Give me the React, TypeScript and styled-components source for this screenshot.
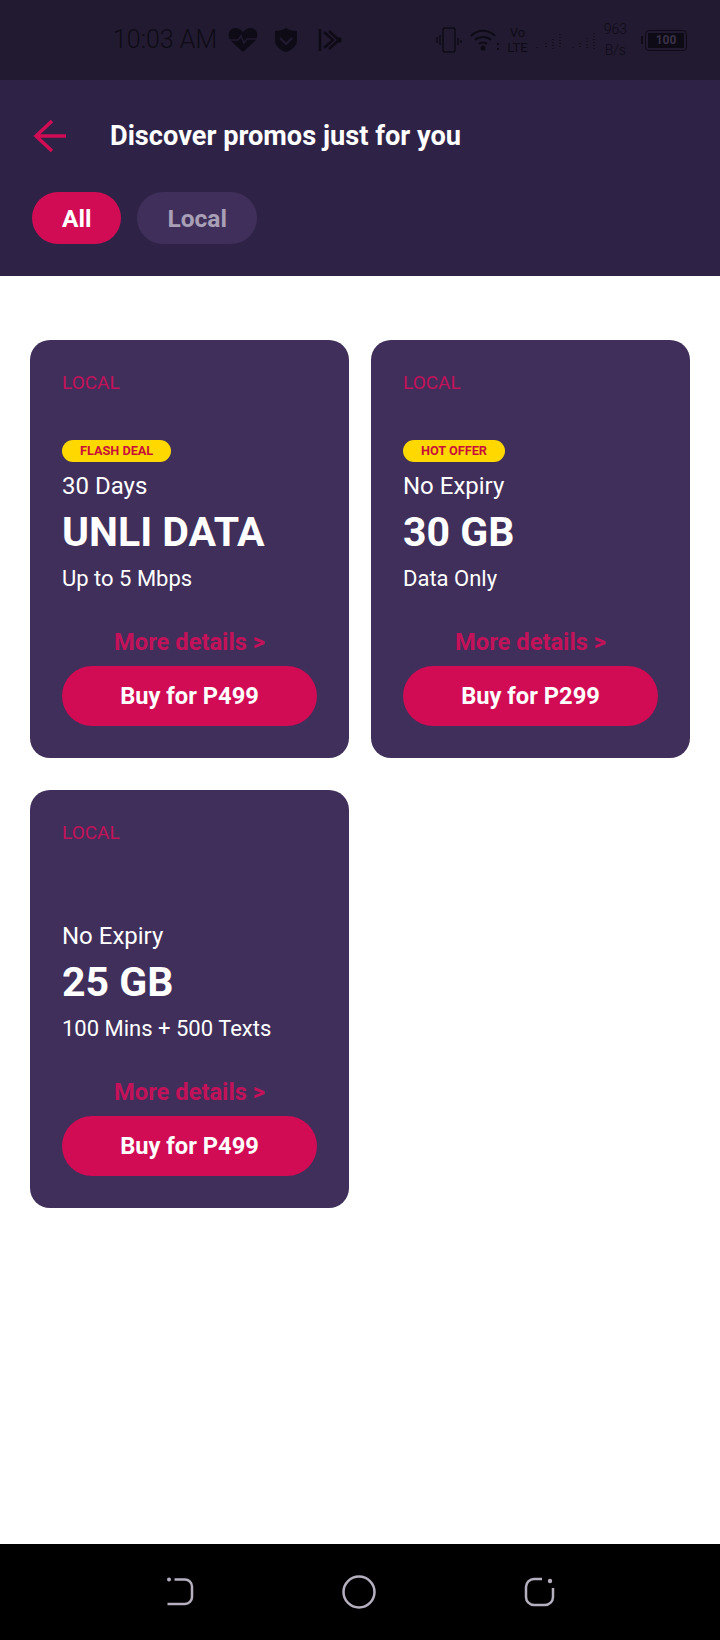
import styled, { createGlobalStyle } from "styled-components";

interface Promo {
  badge?: string;
  validity: string;
  title: string;
  detail: string;
  price: string;
}

const promos: Promo[] = [
  { badge: "FLASH DEAL", validity: "30 Days", title: "UNLI DATA", detail: "Up to 5 Mbps", price: "P499" },
  { badge: "HOT OFFER", validity: "No Expiry", title: "30 GB", detail: "Data Only", price: "P299" },
  { validity: "No Expiry", title: "25 GB", detail: "100 Mins + 500 Texts", price: "P499" },
];

const GlobalStyle = createGlobalStyle`
  html, body {
    margin: 0;
    padding: 0;
    background: #fff;
  }
  * {
    box-sizing: border-box;
  }
`;

const Page = styled.div`
  width: 720px;
  height: 1640px;
  display: flex;
  flex-direction: column;
  font-family: Roboto, "Liberation Sans", sans-serif;
`;

const StatusBar = styled.div`
  height: 80px;
  background: #221a31;
  display: flex;
  align-items: center;
  padding: 0 33px 0 113px;
  color: #0e0b16;
`;

const Time = styled.span`
  width: 115px;
  font-size: 25px;
  font-weight: 300;
  line-height: 80px;
  white-space: nowrap;
`;

const StatusIcons = styled.div`
  display: flex;
  align-items: center;
  gap: 16px;
`;

const PlayIcon = styled.svg`
  margin-left: 4px;
`;

const StatusRight = styled.div`
  margin-left: auto;
  display: flex;
  align-items: center;
  gap: 7px;
`;

const NetStack = styled.div`
  display: flex;
  flex-direction: column;
  align-items: center;
  gap: 1px;
  font-size: 13px;
  line-height: 14px;
  font-weight: 400;
`;

const Speed = styled(NetStack)`
  gap: 0;
  font-size: 14px;
  line-height: 21px;
  font-weight: 300;
  margin-right: 9px;
`;

const Battery = styled.div`
  width: 42px;
  height: 21px;
  margin-left: 2px;
  padding: 2px;
  border: 1.5px solid #0e0b16;
  border-radius: 4px;
  position: relative;
  &::before {
    content: "";
    position: absolute;
    left: -5px;
    top: 5px;
    width: 2px;
    height: 8px;
    background: #0e0b16;
  }
`;

const BatteryLevel = styled.div`
  height: 100%;
  background: #0e0b16;
  color: #3a3148;
  font-size: 12px;
  font-weight: 700;
  line-height: 14px;
  text-align: center;
`;

const Header = styled.header`
  height: 196px;
  background: #2e2347;
  padding: 0 32px;
  display: flex;
  flex-direction: column;
`;

const TitleRow = styled.div`
  height: 112px;
  display: flex;
  align-items: center;
`;

const BackButton = styled.button`
  width: 78px;
  height: 36px;
  padding: 0;
  border: none;
  background: none;
  display: flex;
  align-items: center;
`;

const Title = styled.h1`
  margin: 0;
  color: #fff;
  font-size: 27.2px;
  font-weight: 700;
`;

const Chips = styled.div`
  display: flex;
  gap: 16px;
`;

const Chip = styled.div<{ $active?: boolean }>`
  height: 52px;
  padding: 0 30px;
  border-radius: 26px;
  display: flex;
  align-items: center;
  font-size: 24.5px;
  font-weight: 700;
  background: ${(p) => (p.$active ? "#d10c55" : "#3f2f5a")};
  color: ${(p) => (p.$active ? "#fff" : "#a99fb6")};
`;

const Grid = styled.main`
  flex: 1;
  background: #fff;
  padding: 64px 30px 0;
  display: grid;
  grid-template-columns: 319px 319px;
  grid-auto-rows: 418px;
  gap: 32px 22px;
  align-content: start;
`;

const Card = styled.article`
  background: #3f2f5a;
  border-radius: 20px;
  padding: 31px 32px 32px;
  display: flex;
  flex-direction: column;
`;

const Category = styled.div`
  color: #c4125a;
  font-size: 19px;
  font-weight: 400;
  line-height: 24px;
`;

const BadgeSlot = styled.div`
  height: 22px;
  margin-top: 45px;
`;

const Badge = styled.div`
  width: fit-content;
  height: 22px;
  line-height: 22px;
  padding: 0 18px;
  border-radius: 11px;
  background: #ffd800;
  color: #c80f3c;
  font-size: 12.7px;
  font-weight: 700;
`;

const Validity = styled.div`
  color: #fff;
  font-size: 24px;
  line-height: 30px;
  margin-top: 9px;
`;

const PromoTitle = styled.div`
  color: #fff;
  font-size: 41px;
  font-weight: 700;
  line-height: 50px;
  margin-top: 6px;
`;

const Detail = styled.div`
  color: #fff;
  font-size: 22px;
  line-height: 30px;
  margin-top: 7px;
`;

const MoreLink = styled.div`
  margin-top: auto;
  color: #c4125a;
  font-size: 23.7px;
  font-weight: 700;
  line-height: 30px;
  text-align: center;
  margin-bottom: 9px;
`;

const BuyButton = styled.button`
  height: 60px;
  border: none;
  border-radius: 30px;
  background: #d10c55;
  color: #fff;
  font-family: inherit;
  font-size: 23.7px;
  font-weight: 700;
`;

const NavBar = styled.nav`
  height: 96px;
  background: #000;
  display: flex;
  align-items: center;
  justify-content: center;
  gap: 148px;
`;

const App = () => (
  <Page>
    <GlobalStyle />
    <StatusBar>
      <Time>10:03 AM</Time>
      <StatusIcons>
        <svg width="30" height="26" viewBox="0 0 30 26">
          <path fill="currentColor" d="M15 25 3 14C-1 9 0 2 7 1c4 0 6 2 8 4 2-2 4-4 8-4 7 1 8 8 4 13z" />
          <path fill="none" stroke="#221a31" strokeWidth="1.5" d="M1 13h9l3-4 3 7 3-4h10" />
        </svg>
        <svg width="24" height="26" viewBox="0 0 24 26">
          <path fill="currentColor" d="M12 1c3 2 7 3 11 3v9c0 6-5 10-11 12C6 23 1 19 1 13V4c4 0 8-1 11-3z" />
          <path fill="none" stroke="#221a31" strokeWidth="2" d="m6 11 6 6 6-6" />
        </svg>
        <PlayIcon width="24" height="26" viewBox="0 0 24 26" fill="none" stroke="currentColor" strokeWidth="2.5">
          <path d="M2 2v22M6 5l9 8-9 8M11 4l10 9-10 9" />
          <circle cx="21" cy="13" r="1.5" fill="currentColor" />
        </PlayIcon>
      </StatusIcons>
      <StatusRight>
        <svg width="27" height="26" viewBox="0 0 27 26" fill="none" stroke="currentColor" strokeWidth="1.5">
          <rect x="7" y="1" width="12" height="24" rx="2" />
          <path d="M1 10v6M4 8v10M22 11v7M25 13v3" />
        </svg>
        <svg width="30" height="24" viewBox="0 0 30 24" fill="none" stroke="currentColor" strokeWidth="2">
          <path d="M1 8c7-7 17-7 24 0M5 12c4-4 12-4 16 0M9 16c2-2 6-2 8 0" />
          <circle cx="13" cy="20" r="1.5" fill="currentColor" />
          <path d="M28 15v2M28 20v2" />
        </svg>
        <NetStack>
          <span>Vo</span>
          <span>LTE</span>
        </NetStack>
        <svg width="62" height="24" viewBox="0 0 62 24" fill="none" stroke="currentColor" strokeWidth="1.2" strokeDasharray="1 2">
          <path d="M2 19v2M11 15v6M18 11v10M25 6v15M38 19v2M45 15v6M52 10v11M59 5v16" />
        </svg>
        <Speed>
          <span>963</span>
          <span>B/s</span>
        </Speed>
        <Battery>
          <BatteryLevel>100</BatteryLevel>
        </Battery>
      </StatusRight>
    </StatusBar>
    <Header>
      <TitleRow>
        <BackButton aria-label="Back">
          <svg width="34" height="34" viewBox="0 0 34 34" fill="none" stroke="#d10c55" strokeWidth="3.5">
            <path d="M34 17H4M20 2 4 17l16 15" />
          </svg>
        </BackButton>
        <Title>Discover promos just for you</Title>
      </TitleRow>
      <Chips>
        <Chip $active>All</Chip>
        <Chip>Local</Chip>
      </Chips>
    </Header>
    <Grid>
      {promos.map((promo) => (
        <Card key={promo.title}>
          <Category>LOCAL</Category>
          <BadgeSlot>{promo.badge && <Badge>{promo.badge}</Badge>}</BadgeSlot>
          <Validity>{promo.validity}</Validity>
          <PromoTitle>{promo.title}</PromoTitle>
          <Detail>{promo.detail}</Detail>
          <MoreLink>More details &gt;</MoreLink>
          <BuyButton>Buy for {promo.price}</BuyButton>
        </Card>
      ))}
    </Grid>
    <NavBar>
      <svg width="28" height="30" viewBox="0 0 28 30" fill="none" stroke="#b5afc0" strokeWidth="2.5">
        <circle cx="3" cy="2.5" r="2" fill="#b5afc0" stroke="none" />
        <path d="M8.5 2.5H19a7 7 0 0 1 7 7V20a7 7 0 0 1-7 7H1.5" />
      </svg>
      <svg width="34" height="34" viewBox="0 0 34 34" fill="none" stroke="#b5afc0" strokeWidth="2.5">
        <circle cx="17" cy="17" r="15.5" />
      </svg>
      <svg width="31" height="30" viewBox="0 0 31 30" fill="none" stroke="#b5afc0" strokeWidth="2.5">
        <circle cx="26" cy="4" r="2.2" fill="#b5afc0" stroke="none" />
        <path d="M18 2h-8a8 8 0 0 0-8 8v10a8 8 0 0 0 8 8h11a8 8 0 0 0 8-8v-9" />
      </svg>
    </NavBar>
  </Page>
);

export default App;
